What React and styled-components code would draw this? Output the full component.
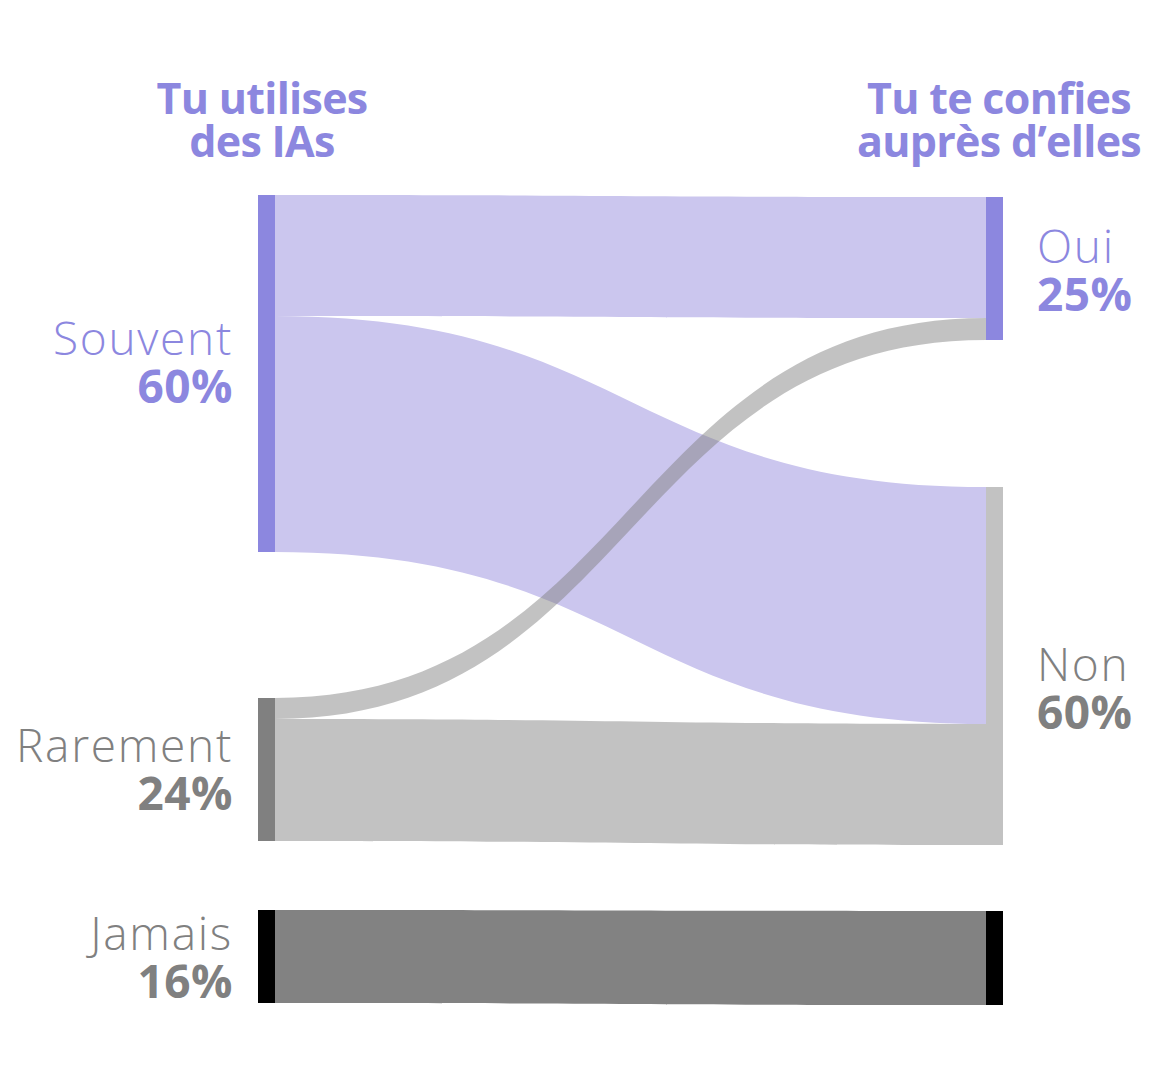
import React from "react";
import styled, { createGlobalStyle } from "styled-components";

const PURPLE = "#8c87df";
const PURPLE_LINK = "#cbc6ee";
const GREY = "#808080";

const GlobalStyle = createGlobalStyle`
  body {
    margin: 0;
    background: #ffffff;
    font-family: "Open Sans", "Noto Sans", sans-serif;
  }
`;

// chart geometry, origin = top left of the left nodes
const W = 745;
const H = 810;
const NODE_W = 17;

const leftNodes = [
  { id: "souvent", y0: 0, y1: 357, color: PURPLE },
  { id: "rarement", y0: 503, y1: 646, color: GREY },
  { id: "jamais", y0: 715, y1: 808, color: "#000000" },
];

const rightNodes = [
  { id: "oui", y0: 2, y1: 145, color: PURPLE },
  { id: "non", y0: 292, y1: 650, color: "#c2c2c2" },
  { id: "jamais", y0: 716, y1: 810, color: "#000000" },
];

const links = [
  { from: [0, 121], to: [2, 123], fill: PURPLE_LINK, opacity: 1 },
  { from: [121, 357], to: [292, 529], fill: PURPLE_LINK, opacity: 1 },
  { from: [503, 524], to: [123, 145], fill: GREY, opacity: 0.48 },
  { from: [524, 646], to: [529, 650], fill: GREY, opacity: 0.48 },
  { from: [715, 808], to: [716, 810], fill: "#828282", opacity: 1 },
];

const linkPath = ({ from, to }) => {
  const x0 = NODE_W;
  const x1 = W - NODE_W;
  const mx = (x0 + x1) / 2;
  return `M${x0},${from[0]} C${mx},${from[0]} ${mx},${to[0]} ${x1},${to[0]}
    L${x1},${to[1]} C${mx},${to[1]} ${mx},${from[1]} ${x0},${from[1]} Z`;
};

const leftLabels = [
  { name: "Souvent", value: "60%", top: 118, color: PURPLE },
  { name: "Rarement", value: "24%", top: 525, color: GREY },
  { name: "Jamais", value: "16%", top: 713, color: GREY },
];

const rightLabels = [
  { name: "Oui", value: "25%", top: 26, color: PURPLE },
  { name: "Non", value: "60%", top: 444, color: GREY },
];

const App = () => {
  return (
    <Page>
      <GlobalStyle />
      <HeaderRow>
        <Title>
          Tu utilises
          <br />
          des IAs
        </Title>
        <Title>
          Tu te confies
          <br />
          auprès d’elles
        </Title>
      </HeaderRow>
      <ChartRow>
        <LabelColumn>
          {leftLabels.map((l) => (
            <NodeLabel key={l.name} $top={l.top} $side="left" $color={l.color}>
              <LabelName>{l.name}</LabelName>
              <LabelValue>{l.value}</LabelValue>
            </NodeLabel>
          ))}
        </LabelColumn>
        <Sankey width={W} height={H} viewBox={`0 0 ${W} ${H}`}>
          {links.map((lk, i) => (
            <path key={i} d={linkPath(lk)} fill={lk.fill} fillOpacity={lk.opacity} />
          ))}
          {leftNodes.map((n) => (
            <rect key={"l" + n.id} x={0} y={n.y0} width={NODE_W} height={n.y1 - n.y0} fill={n.color} />
          ))}
          {rightNodes.map((n) => (
            <rect key={"r" + n.id} x={W - NODE_W} y={n.y0} width={NODE_W} height={n.y1 - n.y0} fill={n.color} />
          ))}
        </Sankey>
        <LabelColumn>
          {rightLabels.map((l) => (
            <NodeLabel key={l.name} $top={l.top} $side="right" $color={l.color}>
              <LabelName>{l.name}</LabelName>
              <LabelValue>{l.value}</LabelValue>
            </NodeLabel>
          ))}
        </LabelColumn>
      </ChartRow>
    </Page>
  );
};

const Page = styled.div`
  width: 1164px;
  height: 1078px;
  display: flex;
  flex-direction: column;
  overflow: hidden;
`;

const HeaderRow = styled.div`
  display: flex;
  padding: 76px 0 0 102px;
  gap: 417px;
`;

const Title = styled.h2`
  margin: 0;
  width: 320px;
  text-align: center;
  font-size: 43px;
  line-height: 43px;
  font-weight: 700;
  color: ${PURPLE};
  letter-spacing: -0.7px;
`;

const ChartRow = styled.div`
  display: grid;
  grid-template-columns: 258px ${W}px 1fr;
  margin-top: 33px;
`;

const LabelColumn = styled.div`
  position: relative;
`;

const NodeLabel = styled.div`
  position: absolute;
  top: ${(p) => p.$top}px;
  ${(p) => (p.$side === "left" ? "right: 25px; text-align: right;" : "left: 34px; text-align: left;")}
  color: ${(p) => p.$color};
  font-size: 46px;
  line-height: 48px;
  white-space: nowrap;
`;

const LabelName = styled.span`
  display: block;
  font-weight: 300;
  letter-spacing: 1.7px;
`;

const LabelValue = styled.span`
  display: block;
  font-weight: 700;
  letter-spacing: 0.5px;
`;

const Sankey = styled.svg`
  display: block;
`;

export default App;
